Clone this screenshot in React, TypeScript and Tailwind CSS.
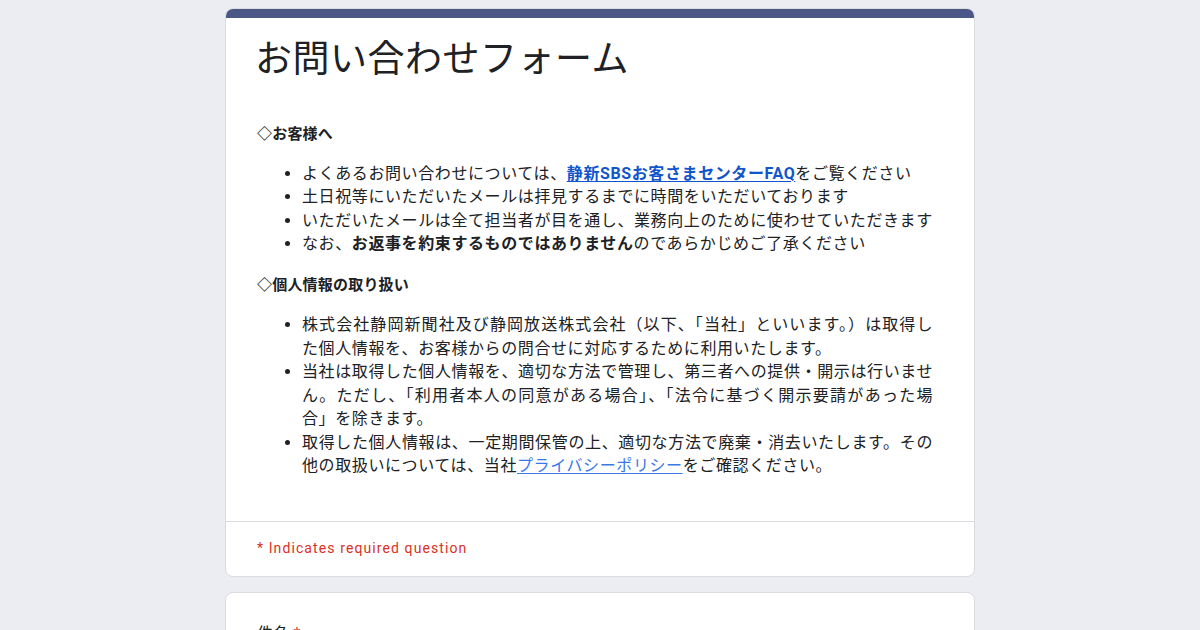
import React from "react";

const font = {
  fontFamily: 'Roboto, "Noto Sans CJK JP", "Noto Sans", sans-serif',
};

function Heading({ children }: { children: React.ReactNode }) {
  return <p className="font-bold text-[15px] leading-[23.5px] tracking-[0.2px]">{children}</p>;
}

export default function App() {
  return (
    <div className="min-h-screen bg-[#ebedf3] pt-2 text-[#202124]" style={font}>
      <div className="w-[750px] mx-auto">
        {/* Header card */}
        <div className="rounded-lg bg-white border border-[#dadce0] overflow-hidden">
          <div className="h-[10px] bg-[#4b5786] -mx-px -mt-px" />
          <div className="px-[31px] pt-[19px] pb-[43px]">
            <h1 className="text-[37px] leading-[45px] font-normal tracking-[0.5px] -ml-[2px]">
              お問い合わせフォーム
            </h1>

            <div className="mt-[41px] text-[16px] leading-[23.5px]">
              <Heading>◇お客様へ</Heading>
              <ul className="mt-[15px] list-disc pl-[45px] pr-[10px] tracking-[0.6px] whitespace-nowrap">
                <li>
                  よくあるお問い合わせについては、
                  <a href="#" className="font-bold text-[#1155cc] underline underline-offset-2">
                    静新SBSお客さまセンターFAQ
                  </a>
                  をご覧ください
                </li>
                <li>土日祝等にいただいたメールは拝見するまでに時間をいただいております</li>
                <li>いただいたメールは全て担当者が目を通し、業務向上のために使わせていただきます</li>
                <li>
                  なお、<span className="font-bold">お返事を約束するものではありません</span>
                  のであらかじめご了承ください
                </li>
              </ul>

              <div className="mt-[18px]">
                <Heading>◇個人情報の取り扱い</Heading>
              </div>
              <ul className="mt-[16px] list-disc pl-[45px] pr-[10px] tracking-[0.6px]">
                <li>
                  <span className="block [text-align-last:justify]">
                    株式会社静岡新聞社及び静岡放送株式会社（以下、「当社」といいます。）は取得し
                  </span>
                  <span className="block">た個人情報を、お客様からの問合せに対応するために利用いたします。</span>
                </li>
                <li>
                  <span className="block [text-align-last:justify]">
                    当社は取得した個人情報を、適切な方法で管理し、第三者への提供・開示は行いませ
                  </span>
                  <span className="block [text-align-last:justify]">
                    ん。ただし、「利用者本人の同意がある場合」、「法令に基づく開示要請があった場
                  </span>
                  <span className="block">合」を除きます。</span>
                </li>
                <li>
                  <span className="block [text-align-last:justify]">
                    取得した個人情報は、一定期間保管の上、適切な方法で廃棄・消去いたします。その
                  </span>
                  <span className="block">
                    他の取扱いについては、当社
                    <a href="#" className="text-[#3b78e7] underline underline-offset-2">
                      プライバシーポリシー
                    </a>
                    をご確認ください。
                  </span>
                </li>
              </ul>
            </div>
          </div>

          <div className="border-t border-[#dadce0] px-[31px] pt-[16px] pb-[18px]">
            <p className="text-[14px] leading-[20px] text-[#d93025] tracking-[1.1px]">
              * Indicates required question
            </p>
          </div>
        </div>

        {/* First question card */}
        <div className="mt-[15px] rounded-lg bg-white border border-[#dadce0] px-[31px] pt-[29px] pb-[24px]">
          <p className="text-[16px] leading-[24px] tracking-[0.2px]">
            件名 <span className="text-[#d93025]">*</span>
          </p>
          <div className="mt-[16px] w-[340px] h-[32px] border-b border-[#dadce0]" />
        </div>
      </div>
    </div>
  );
}
